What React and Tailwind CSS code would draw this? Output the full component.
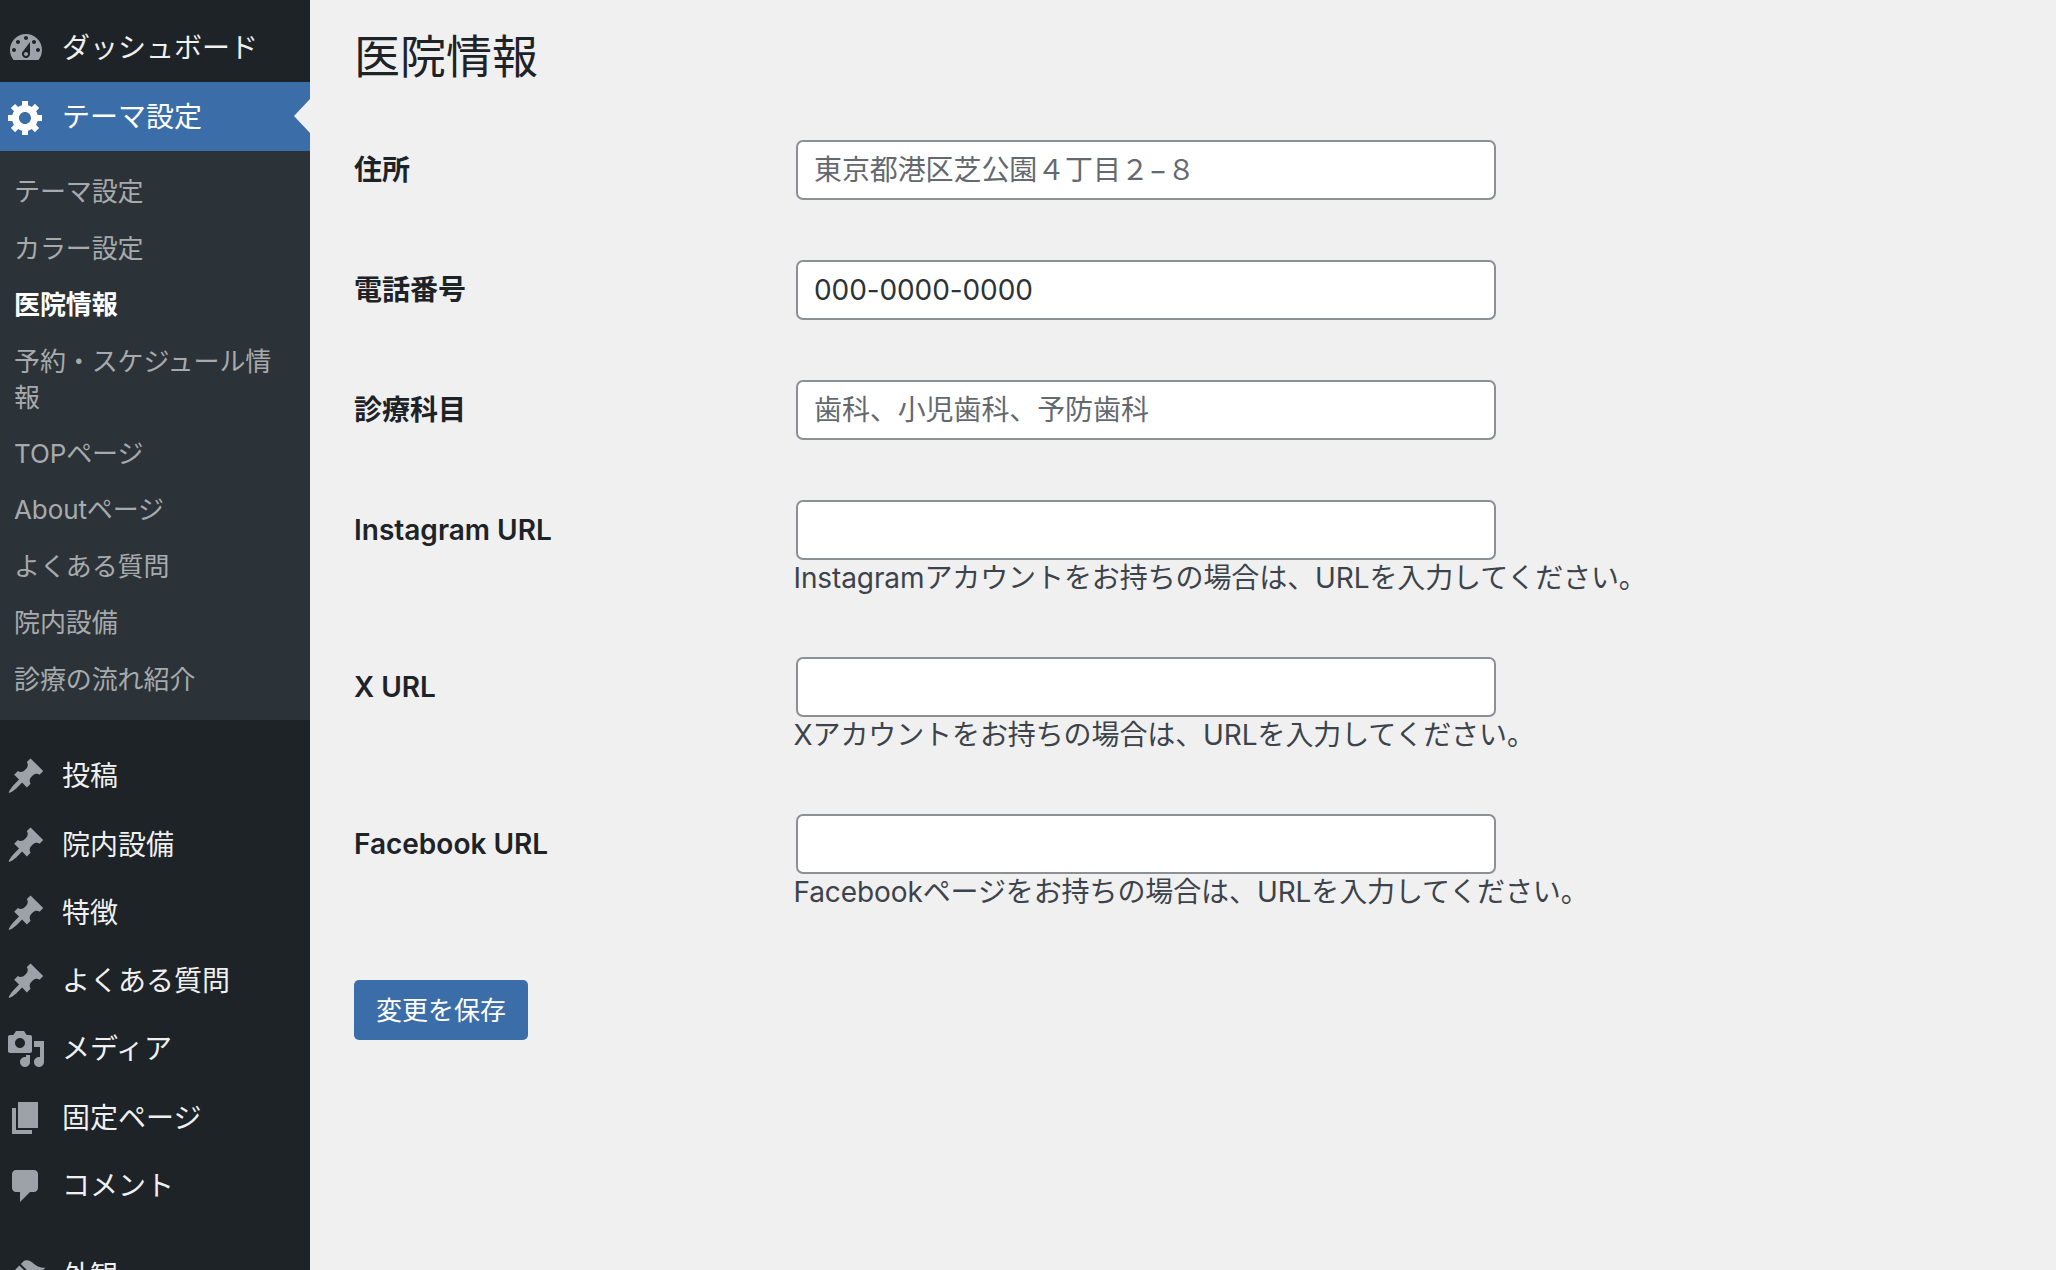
const pin = "M10.44 3.02l1.82-1.82 6.36 6.35-1.83 1.82c-1.05-.68-2.48-.57-3.41.36l-.75.75c-.92.93-1.04 2.35-.35 3.41l-1.83 1.82-2.41-2.41-2.8 2.79c-.42.42-3.38 2.71-3.8 2.29s1.86-3.39 2.28-3.81l2.79-2.79L4.1 9.36l1.83-1.82c1.05.69 2.48.57 3.4-.36l.75-.75c.93-.92 1.05-2.35.36-3.41z"
const gear = "M18 12h-2.18c-.17.7-.44 1.35-.81 1.93l1.54 1.54-2.1 2.1-1.54-1.54c-.58.36-1.23.63-1.91.79V19H8v-2.18c-.68-.16-1.33-.43-1.91-.79l-1.54 1.54-2.12-2.12 1.54-1.54c-.36-.58-.63-1.23-.79-1.91H1V9.03h2.17c.16-.7.44-1.35.8-1.94L2.43 5.55l2.1-2.1 1.54 1.54c.58-.37 1.24-.64 1.93-.81V2h3v2.18c.68.16 1.33.43 1.91.79l1.54-1.54 2.12 2.12-1.54 1.54c.36.59.64 1.24.8 1.94H18V12zm-8.5 1.5c1.66 0 3-1.34 3-3s-1.34-3-3-3-3 1.34-3 3 1.34 3 3 3z"
const dashboard = "M3.76 16h12.48c1.1-1.37 1.76-3.11 1.76-5 0-4.42-3.58-8-8-8s-8 3.58-8 8c0 1.89.66 3.63 1.76 5zM10 4c.55 0 1 .45 1 1s-.45 1-1 1-1-.45-1-1 .45-1 1-1zM6 6c.55 0 1 .45 1 1s-.45 1-1 1-1-.45-1-1 .45-1 1-1zm8 0c.55 0 1 .45 1 1s-.45 1-1 1-1-.45-1-1 .45-1 1-1zm-5.37 5.55L12 7v6c0 1.1-.9 2-2 2s-2-.9-2-2c0-.57.24-1.08.63-1.45zM4 10c.55 0 1 .45 1 1s-.45 1-1 1-1-.45-1-1 .45-1 1-1zm12 0c.55 0 1 .45 1 1s-.45 1-1 1-1-.45-1-1 .45-1 1-1zm-5 3c0-.55-.45-1-1-1s-1 .45-1 1 .45 1 1 1 1-.45 1-1z"
const media = "M13 11V4c0-.55-.45-1-1-1h-1.67L9 1H5L3.67 3H2c-.55 0-1 .45-1 1v7c0 .55.45 1 1 1h10c.55 0 1-.45 1-1zM7 4.5c1.38 0 2.5 1.12 2.5 2.5S8.38 9.5 7 9.5 4.5 8.38 4.5 7 5.62 4.5 7 4.5zM14 6h5v10.5c0 1.38-1.12 2.5-2.5 2.5S14 17.88 14 16.5s1.12-2.5 2.5-2.5c.17 0 .34.02.5.05V9h-3V6zm-4 8.05V13h2v3.5c0 1.38-1.12 2.5-2.5 2.5S7 17.88 7 16.5 8.12 14 9.5 14c.17 0 .34.02.5.05z"
const page = "M6 15V2h10v13H6zm-1 1h8v2H3V5h2v11z"
const comment = "M5 2h9c1.1 0 2 .9 2 2v7c0 1.1-.9 2-2 2h-2l-5 5v-5H5c-1.1 0-2-.9-2-2V4c0-1.1.9-2 2-2z"
const brush = "M14.48 11.06L7.41 3.99l1.5-1.5c.5-.56 2.3-.47 3.51.32 1.21.8 1.43 1.28 2.91 2.1 1.18.64 2.45 1.26 4.45.85zm-.71.71L6.7 4.7 4.93 6.47c-.39.39-.39 1.02 0 1.41l1.06 1.06c.39.39.39 1.03 0 1.42-.6.6-1.43 1.11-2.21 1.69-.35.26-.7.53-1.01.84C1.43 13.23.4 14.96 1.4 15.97c.99 1 2.73-.04 3.07-.35.31-.31.58-.66.84-1.01.58-.78 1.09-1.61 1.69-2.21.39-.39 1.03-.39 1.42 0l1.06 1.06c.39.39 1.02.39 1.41 0z"

function Icon({ d, className }) {
  return (
    <svg viewBox="0 0 20 20" className={"w-10 h-10 fill-current " + className}>
      <path d={d} />
    </svg>
  )
}

function MenuItem({ icon, label, active }) {
  return (
    <div className={"relative flex items-center pl-[6px] " + (active ? "h-[69px] bg-[#3b6ea8] text-white" : "h-[68.25px] text-[#f0f0f1]")}>
      <Icon d={icon} className={active ? "text-white" : "text-[#9ca2a7]"} />
      <span className="ml-[16px] text-[28px]">{label}</span>
      {active && <div className="absolute right-0 top-[17px] border-y-[17px] border-r-[16px] border-y-transparent border-r-[#f0f0f1]" />}
    </div>
  )
}

const subItems = ["テーマ設定", "カラー設定", "医院情報", "予約・スケジュール情報", "TOPページ", "Aboutページ", "よくある質問", "院内設備", "診療の流れ紹介"]

function Field({ label, value, placeholder, hint }) {
  return (
    <div className="flex pb-[60px]">
      <div className="w-[442px] h-[60px] flex items-center font-semibold text-[28px] text-[#1d2327]">{label}</div>
      <div className="flex flex-col">
        <input
          readOnly
          value={value}
          placeholder={placeholder}
          className="w-[700px] h-[60px] px-[16px] bg-white border-2 border-[#8c8f94] rounded-[7px] text-[28px] -tracking-[0.1px] text-[#2c3338] placeholder:text-[#646970] outline-none"
        />
        {hint && <p className="-ml-[2.5px] h-[37px] leading-[36px] text-[28px] -tracking-[0.1px] text-[#3c434a] whitespace-nowrap">{hint}</p>}
      </div>
    </div>
  )
}

export default function App() {
  return (
    <div className="flex h-[1270px] overflow-hidden bg-[#f0f0f1] font-['Inter','Noto_Sans_CJK_JP',sans-serif]">
      <aside className="w-[310px] shrink-0 bg-[#1d2327] pt-[14px]">
        <MenuItem icon={dashboard} label="ダッシュボード" />
        <MenuItem icon={gear} label="テーマ設定" active />
        <ul className="bg-[#2c3338] pt-[13px] pb-[12px] mb-[22px]">
          {subItems.map(item => (
            <li key={item} className={"pl-[14px] pr-[34px] text-[26px] -tracking-[0.1px] " + (item === "予約・スケジュール情報" ? "leading-[36px] py-[10px] " : "leading-[28.5px] py-[14px] ") + (item === "医院情報" ? "font-bold text-white" : "text-[#a7aaad]")}>{item}</li>
          ))}
        </ul>
        <MenuItem icon={pin} label="投稿" />
        <MenuItem icon={pin} label="院内設備" />
        <MenuItem icon={pin} label="特徴" />
        <MenuItem icon={pin} label="よくある質問" />
        <MenuItem icon={media} label="メディア" />
        <MenuItem icon={page} label="固定ページ" />
        <MenuItem icon={comment} label="コメント" />
        <div className="mt-[22px]">
          <MenuItem icon={brush} label="外観" />
        </div>
      </aside>
      <main className="flex-1 pl-[44px] pt-[22px]">
        <h1 className="text-[46px] leading-[68px] text-[#1d2327] mb-[50px]">医院情報</h1>
        <Field label="住所" placeholder="東京都港区芝公園４丁目２−８" />
        <Field label="電話番号" value="000-0000-0000" />
        <Field label="診療科目" placeholder="歯科、小児歯科、予防歯科" />
        <Field label="Instagram URL" hint="Instagramアカウントをお持ちの場合は、URLを入力してください。" />
        <Field label="X URL" hint="Xアカウントをお持ちの場合は、URLを入力してください。" />
        <Field label="Facebook URL" hint="Facebookページをお持ちの場合は、URLを入力してください。" />
        <button className="w-[174px] h-[60px] mt-[9px] bg-[#3b6ea8] text-white text-[26px] rounded-[5px]">変更を保存</button>
      </main>
    </div>
  )
}
